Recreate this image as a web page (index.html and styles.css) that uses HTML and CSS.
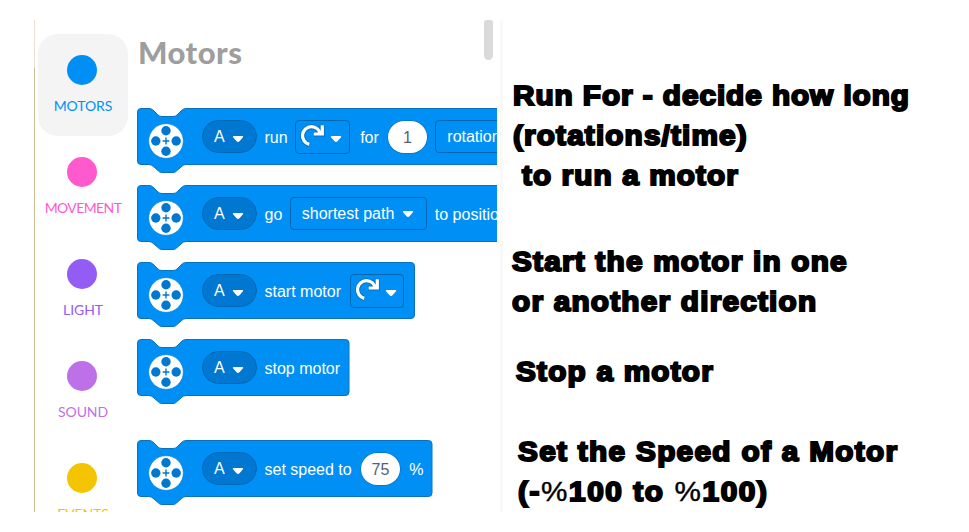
FILE: index.html
```html
<!DOCTYPE html>
<html lang="en">
<head>
<meta charset="utf-8">
<title>Motor blocks</title>
<link rel="stylesheet" href="styles.css">
</head>
<body>
<svg class="defs" width="0" height="0">
  <defs>
    <symbol id="hub" viewBox="0 0 36 36">
      <circle cx="18" cy="18" r="17.3" fill="#fff" stroke="#0b7ed8" stroke-width=".6"/>
      <g fill="#0077d0"><circle cx="18" cy="7.8" r="4.7"/><circle cx="18" cy="28.2" r="4.7"/><circle cx="7.8" cy="18" r="4.7"/><circle cx="28.2" cy="18" r="4.7"/></g>
      <path d="M18 14.6v6.8M14.6 18h6.8" stroke="#0077d0" stroke-width="1.4"/>
    </symbol>
    <symbol id="caret" viewBox="0 0 12 8">
      <path d="M1.600 1.700H10.400L6.900 5.800Q6 6.700 5.100 5.800Z" fill="#fff" stroke="#fff" stroke-width="1.5" stroke-linejoin="round"/>
    </symbol>
    <symbol id="turn" viewBox="0 0 26 26">
      <g fill="none" stroke="#0876c9" stroke-width="5.4"><path d="M9.7 21.6A9 9 0 1 1 20.4 11.5"/><path d="M13.2 11H22.3V1.8"/></g>
      <g fill="none" stroke="#fff" stroke-width="3.2"><path d="M9.3 21.4A9 9 0 1 1 20.4 11.5"/><path d="M13.7 11H22.3V2.3"/></g>
    </symbol>
  </defs>
</svg>
<main class="page">
  <nav class="categories">
    <div class="category motors active"><i></i><span>MOTORS</span></div>
    <div class="category movement"><i></i><span>MOVEMENT</span></div>
    <div class="category light"><i></i><span>LIGHT</span></div>
    <div class="category sound"><i></i><span>SOUND</span></div>
    <div class="category events"><i></i><span>EVENTS</span></div>
  </nav>
  <section class="palette">
    <h1>Motors</h1>
    <div class="scrollbar"></div>
    <div class="block">
      <svg class="shape" width="440" height="67"><path d="M.5 4Q.5 .5 4 .5H11C14 .5 15 1 17 3L21 7Q22.500 8.500 25 8.500H36Q38.500 8.500 40 7L44 3Q46 .5 49 .5H434V56.500H49Q46 56.500 44 59L40 62.500Q38.500 64.500 36 64.500H25Q22.500 64.500 21 62.500L17 59Q14.500 56.500 12 56.500H4Q.5 56.500 .5 53Z"/></svg>
      <svg class="hub"><use href="#hub"/></svg><b class="rule"></b>
      <span class="port">A<svg class="caret"><use href="#caret"/></svg></span>
      <span>run</span><span class="field direction"><svg class="turn"><use href="#turn"/></svg><svg class="caret"><use href="#caret"/></svg></span>
      <span class="after-direction">for</span><span class="number wide-gap">1</span><span class="field unit">rotations</span>
    </div>
    <div class="block">
      <svg class="shape" width="440" height="67"><path d="M.5 4Q.5 .5 4 .5H11C14 .5 15 1 17 3L21 7Q22.500 8.500 25 8.500H36Q38.500 8.500 40 7L44 3Q46 .5 49 .5H434V56.500H49Q46 56.500 44 59L40 62.500Q38.500 64.500 36 64.500H25Q22.500 64.500 21 62.500L17 59Q14.500 56.500 12 56.500H4Q.5 56.500 .5 53Z"/></svg>
      <svg class="hub"><use href="#hub"/></svg><b class="rule"></b>
      <span class="port">A<svg class="caret"><use href="#caret"/></svg></span>
      <span>go</span><span class="field path">shortest path<svg class="caret"><use href="#caret"/></svg></span><span>to position</span>
    </div>
    <div class="block">
      <svg class="shape" width="440" height="67"><path d="M.5 4Q.5 .5 4 .5H11C14 .5 15 1 17 3L21 7Q22.500 8.500 25 8.500H36Q38.500 8.500 40 7L44 3Q46 .5 49 .5H274Q277.500 .5 277.500 4V53Q277.500 56.500 274 56.500H49Q46 56.500 44 59L40 62.500Q38.500 64.500 36 64.500H25Q22.500 64.500 21 62.500L17 59Q14.500 56.500 12 56.500H4Q.5 56.500 .5 53Z"/></svg>
      <svg class="hub"><use href="#hub"/></svg><b class="rule"></b>
      <span class="port">A<svg class="caret"><use href="#caret"/></svg></span>
      <span>start motor</span><span class="field direction wide-gap"><svg class="turn"><use href="#turn"/></svg><svg class="caret"><use href="#caret"/></svg></span>
    </div>
    <div class="block">
      <svg class="shape" width="440" height="67"><path d="M.5 4Q.5 .5 4 .5H11C14 .5 15 1 17 3L21 7Q22.500 8.500 25 8.500H36Q38.500 8.500 40 7L44 3Q46 .5 49 .5H208.500Q212 .5 212 4V53Q212 56.500 208.500 56.500H49Q46 56.500 44 59L40 62.500Q38.500 64.500 36 64.500H25Q22.500 64.500 21 62.500L17 59Q14.500 56.500 12 56.500H4Q.5 56.500 .5 53Z"/></svg>
      <svg class="hub"><use href="#hub"/></svg><b class="rule"></b>
      <span class="port">A<svg class="caret"><use href="#caret"/></svg></span>
      <span>stop motor</span>
    </div>
    <div class="block spaced">
      <svg class="shape" width="440" height="67"><path d="M.5 4Q.5 .5 4 .5H11C14 .5 15 1 17 3L21 7Q22.500 8.500 25 8.500H36Q38.500 8.500 40 7L44 3Q46 .5 49 .5H291.500Q295 .5 295 4V53Q295 56.500 291.500 56.500H49Q46 56.500 44 59L40 62.500Q38.500 64.500 36 64.500H25Q22.500 64.500 21 62.500L17 59Q14.500 56.500 12 56.500H4Q.5 56.500 .5 53Z"/></svg>
      <svg class="hub"><use href="#hub"/></svg><b class="rule"></b>
      <span class="port">A<svg class="caret"><use href="#caret"/></svg></span>
      <span>set speed to</span><span class="number wide-gap">75</span><span class="wide-gap">%</span>
    </div>
  </section>
  <aside class="notes">
    <div class="note run"><p class="l1">Run For - decide how long</p><p class="l2">(rotations/time)</p><p class="l3">to run a motor</p></div>
    <div class="note start"><p>Start the motor in one</p><p>or another direction</p></div>
    <div class="note stop"><p>Stop a motor</p></div>
    <div class="note speed"><p>Set the Speed of a Motor</p><p class="range">(-<em>%</em>100 to <em>%</em>100)</p></div>
  </aside>
</main>
</body>
</html>
```
FILE: styles.css
```css
* { box-sizing: border-box; }
body { margin: 0; background: #fff; width: 969px; height: 532px; overflow: hidden; }
.defs { position: absolute; }
.page { display: flex; margin: 20px 0 0 34px; height: 492px; width: 935px; }

.categories {
  width: 103px; padding: 14px 0 0 3px; overflow: hidden; flex: none;
  border-left: 1px solid; border-image: linear-gradient(#e9e2d2 0 49px, #cabf94 49px) 1;
}
.category {
  width: 90px; height: 102px; padding-top: 21px; border-radius: 20px;
  display: flex; flex-direction: column; align-items: center;
  font: 14px/20px Lato, sans-serif; letter-spacing: -.1px; white-space: nowrap;
}
.category i { width: 30px; height: 30px; flex: none; border-radius: 50%; background: currentColor; margin-left: -2px; }
.category span { margin-top: 11px; }
.active { background: #f4f4f4; }
.motors { color: #0090f5; }
.movement { color: #ff5acd; letter-spacing: -.6px; }
.light { color: #935cf5; }
.sound { color: #be70e8; }
.events { color: #f5c400; }

.palette { width: 360px; flex: none; overflow: hidden; position: relative; }
h1 { margin: 12px 0 36px 1px; height: 40px; font: 900 31px/40px Lato, sans-serif; letter-spacing: .5px; color: #9e9e9e; }
.scrollbar { position: absolute; right: 4px; top: 0; width: 9px; height: 40px; border-radius: 3px 3px 5px 5px; background: #dadada; }
.block {
  position: relative; display: flex; align-items: center; gap: 8px;
  width: 440px; height: 58px; margin-bottom: 19px; padding-left: 10px;
  font: 16px/20px "Liberation Sans", Arial, sans-serif; color: #fff; white-space: nowrap;
}
.block.spaced { margin-top: 43px; }
.shape { position: absolute; left: 0; top: 0; }
.shape path { fill: #0090f5; stroke: #0872bd; }
.hub { width: 36px; height: 36px; position: relative; left: .5px; top: 3.500px; flex: none; }
.rule { width: 1px; height: 41px; background: #0081df; margin-left: 2px; }
.block > span { position: relative; padding-top: 2px; }
.caret { width: 12px; height: 8px; flex: none; }
.block > .port, .block > .field { display: flex; align-items: center; border: 1px solid #0067b3; height: 33px; margin-top: -1px; }
.block > .port { width: 55px; border-radius: 17px; background: #0077d0; padding: 1px 0 0 11px; gap: 7px; margin-right: -.5px; }
.port .caret { margin-top: 4px; }
.block > .field { border-radius: 4px; padding: 1px 11px 0; margin-left: -.5px; }
.block > .direction { width: 54.500px; height: 34px; margin-top: 0; padding: 0 8px 0 4px; gap: 4px; margin-right: 2.500px; }
.direction .turn { width: 26px; height: 26px; flex: none; margin-top: -2px; }
.direction .caret { margin-top: 4px; }
.block > .path { width: 137px; gap: 8px; }
.block > .unit { margin-left: 0; }
.block > .number {
  width: 39.500px; height: 32px; padding: 0; margin-top: -1px; border-radius: 16px; background: #fff;
  box-shadow: 0 0 0 .5px #0067b3; color: #575e75; text-align: center; line-height: 33px;
}
.block > .wide-gap { margin-left: 1px; }

.notes {
  width: 435px; margin-left: 3px; border-left: 3px solid #f9f9f9;
  font: bold 27.500px/40px "Liberation Sans", "Arial Black", sans-serif;
  color: #000; -webkit-text-stroke: 2px #000; white-space: nowrap;
}
.note p { margin: 0; transform: scaleX(1.08); transform-origin: left; }
.note em { font-style: normal; font-weight: 400; -webkit-text-stroke: .4px #000; }
.run { padding: 56px 0 0 10px; letter-spacing: .89px; }
.run .l2 { letter-spacing: 1.080px; }
.run .l3 { margin-left: 9px; letter-spacing: 1.030px; }
.start { padding: 46px 0 0 9px; letter-spacing: 1.150px; }
.stop { padding: 30px 0 0 13px; letter-spacing: 1.150px; }
.speed { padding: 40px 0 0 15px; letter-spacing: 1.240px; }
.speed .range { letter-spacing: 1.500px; }
```
